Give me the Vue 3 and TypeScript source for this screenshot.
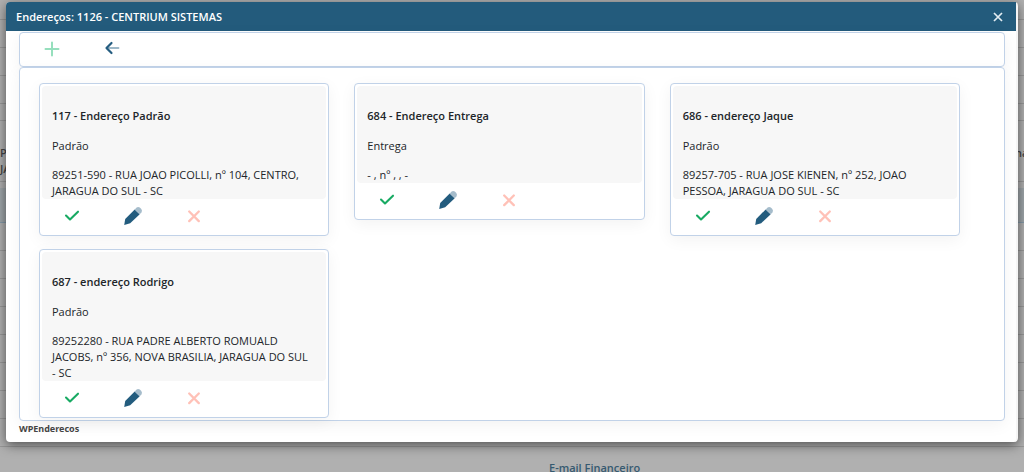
<script setup lang="ts">
interface Address {
  id: number
  name: string
  kind: string
  text: string
}

const addresses: Address[] = [
  { id: 117, name: 'Endereço Padrão', kind: 'Padrão', text: '89251-590 - RUA JOAO PICOLLI, nº 104, CENTRO, JARAGUA DO SUL - SC' },
  { id: 684, name: 'Endereço Entrega', kind: 'Entrega', text: '- , nº , , -' },
  { id: 686, name: 'endereço Jaque', kind: 'Padrão', text: '89257-705 - RUA JOSE KIENEN, nº 252, JOAO PESSOA, JARAGUA DO SUL - SC' },
  { id: 687, name: 'endereço Rodrigo', kind: 'Padrão', text: '89252280 - RUA PADRE ALBERTO ROMUALD JACOBS, nº 356, NOVA BRASILIA, JARAGUA DO SUL - SC' },
]
</script>

<template>
  <div class="page">
    <div class="backdrop">
      <div class="row short"></div>
      <div class="row"></div>
      <div class="row"></div>
      <div class="row"></div>
      <div class="row thin"></div>
      <div class="row head"><span>P<br>JA</span><span>ná</span></div>
      <div class="row gap"></div>
      <div class="row selected"></div>
      <div v-for="n in 8" :key="n" class="row"></div>
      <div class="caption"><span>E-mail Financeiro</span></div>
    </div>

    <section class="dialog" role="dialog" aria-labelledby="dialog-title">
      <header class="titlebar">
        <h1 id="dialog-title">Endereços: 1126 - CENTRIUM SISTEMAS</h1>
        <button class="close" type="button" aria-label="Fechar">
          <svg width="10" height="10" viewBox="0 0 10 10"><path d="M1 1L9 9M9 1L1 9" stroke="#e3edf2" stroke-width="1.7" fill="none" /></svg>
        </button>
      </header>
      <div class="body">
        <nav class="toolbar">
          <button type="button" aria-label="Adicionar">
            <svg width="16" height="16" viewBox="0 0 16 16"><path d="M8 1.5V14.5M1.5 8H14.5" stroke="#96dfbd" stroke-width="2" fill="none" stroke-linecap="round" /></svg>
          </button>
          <button class="back" type="button" aria-label="Voltar">
            <svg width="16" height="16" viewBox="0 0 16 16"><path d="M3 8H14.5" stroke="#9db8c8" stroke-width="1.8" stroke-linecap="round" /><path d="M7.5 3L2.5 8L7.5 13" stroke="#255d80" stroke-width="2.2" fill="none" stroke-linecap="round" stroke-linejoin="round" /></svg>
          </button>
        </nav>
        <main class="cards">
          <article v-for="a in addresses" :key="a.id" class="card">
            <div class="info">
              <h2>{{ a.id }} - {{ a.name }}</h2>
              <p>{{ a.kind }}</p>
              <p>{{ a.text }}</p>
            </div>
            <div class="actions">
              <button type="button" aria-label="Selecionar">
                <svg width="16" height="16" viewBox="0 0 16 16"><path d="M2 7.5L6 11.5L14 3.7" stroke="#18aa63" stroke-width="2.1" fill="none" stroke-linecap="round" stroke-linejoin="round" /></svg>
              </button>
              <button type="button" aria-label="Editar">
                <svg width="20" height="20" viewBox="0 0 20 20"><path d="M1.2 19L2.2 13L11.7 3.4L16.7 8.2L7.2 17.3Z" fill="#235c7e" /><path d="M11.7 3.4L13.4 1.8Q15 .5 16.8 1.6L18.3 3Q19.7 4.7 18.4 6.4L16.7 8.2Z" fill="#a5bccb" /></svg>
              </button>
              <button type="button" aria-label="Excluir">
                <svg width="16" height="16" viewBox="0 0 16 16"><path d="M3.2 3.5L12.8 13.1M12.8 3.5L3.2 13.1" stroke="#ffc1b7" stroke-width="2.3" fill="none" stroke-linecap="round" /></svg>
              </button>
            </div>
          </article>
        </main>
        <footer>WPEnderecos</footer>
      </div>
    </section>
  </div>
</template>

<style>
body {
  margin: 0;
}
</style>

<style scoped>
* {
  box-sizing: border-box;
}
.page {
  position: relative;
  height: 100vh;
  overflow: hidden;
  padding: 2px 6px;
  background: #b0b0b0;
  font-family: "Open Sans", "Noto Sans", sans-serif;
  font-size: 11px;
  line-height: 16px;
  color: #212529;
}
.backdrop {
  position: absolute;
  inset: 0;
}
.row {
  height: 28px;
  border-bottom: 1px solid #989898;
}
.row.short {
  height: 20px;
}
.row.thin {
  height: 17px;
}
.row.head {
  display: flex;
  justify-content: space-between;
  height: 61px;
  padding-top: 24px;
  font-weight: 600;
  color: #454545;
}
.row.head span:last-child {
  width: 9px;
}
.row.gap {
  height: 6px;
  border: 0;
}
.row.selected {
  height: 35px;
  background: #9fa6aa;
  border-color: #8499a8;
}
.caption {
  padding: 13px 0 0 549px;
  font-weight: 600;
  color: #365a70;
}
.dialog {
  position: relative;
  background: #fff;
  border-right: 2px solid #f5f5f5;
  border-radius: 4px;
  box-shadow: 0 3px 12px rgba(0, 0, 0, 0.55);
}
.titlebar {
  display: flex;
  align-items: center;
  justify-content: space-between;
  height: 29px;
  padding: 0 13px 0 10px;
  background: #235b7c;
  border-radius: 4px 0 0 0;
}
h1 {
  margin: 0;
  font-size: 11px;
  font-weight: 600;
  color: #fff;
}
button {
  display: flex;
  align-items: center;
  justify-content: center;
  padding: 0;
  border: 0;
  background: none;
  cursor: pointer;
}
.body {
  padding: 1px 11px 5px 13px;
}
.toolbar,
.cards,
.card {
  border: 1px solid #c1d2e8;
  border-radius: 4px;
  background: #fff;
  box-shadow: 0 4px 16px rgba(0, 0, 0, 0.05);
}
.toolbar {
  display: flex;
  align-items: flex-start;
  gap: 44px;
  height: 35px;
  padding: 8px 24px;
}
.back {
  height: 13px;
}
.cards {
  display: grid;
  grid-template-columns: repeat(3, 1fr);
  gap: 13px 25px;
  align-items: start;
  padding: 15px 44px 2px 19px;
}
.card {
  padding: 2px;
}
.info {
  padding: 22px 14px 0 10px;
  background: #f7f7f7;
  border-radius: 4px;
}
h2,
p {
  margin: 0 0 13px;
  font-size: 11px;
  line-height: 16px;
}
h2 {
  margin-bottom: 14px;
  font-weight: 600;
}
p:last-child {
  margin-bottom: 0;
}
.actions {
  display: flex;
  align-items: center;
  gap: 41px;
  height: 34px;
  padding: 0 0 0 20px;
}
.actions button {
  width: 20px;
}
footer {
  font-family: "Noto Sans", sans-serif;
  font-size: 9px;
  font-weight: 700;
  line-height: 16px;
  color: #444;
}
</style>
